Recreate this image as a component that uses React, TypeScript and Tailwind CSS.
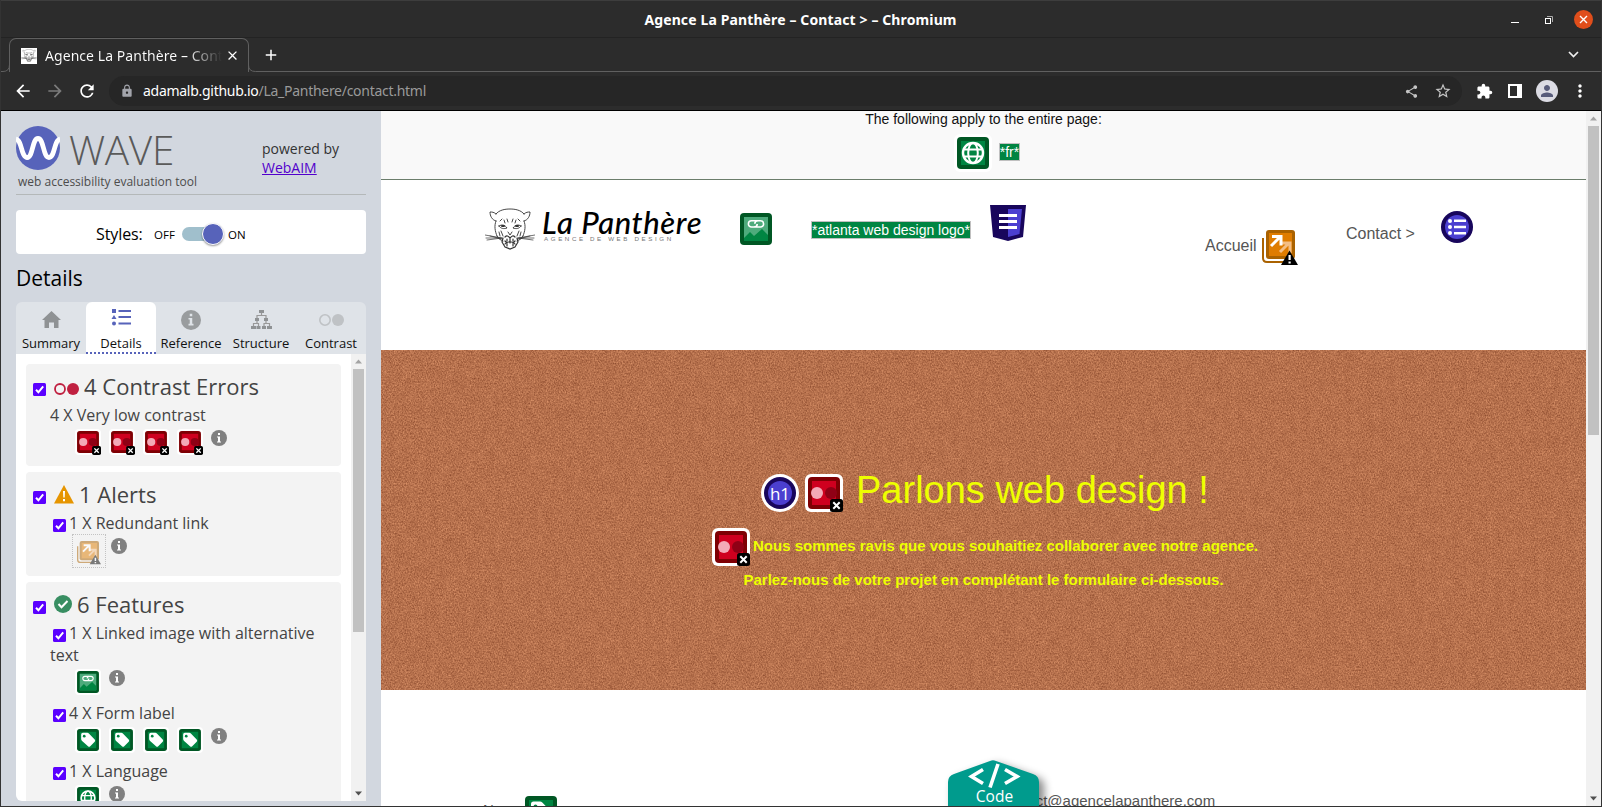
import React from "react";
import type { ReactNode } from "react";
import { MdShare, MdStarBorder, MdExtension, MdPerson, MdMoreVert, MdLock, MdArrowBack, MdArrowForward, MdRefresh, MdAdd, MdClose } from "react-icons/md";

function Panther({ className }: { className: string }) {
  return (
    <svg className={className} viewBox="0 0 50 42" fill="none" stroke="#333" strokeWidth="0.9" strokeLinecap="round">
      <path d="M11 6C14 2 20 1 25 1s11 1 14 5M11 6C9 4 7 4 5 4c0 4 2 8 6 9M39 6c2-2 4-2 6-2 0 4-2 8-6 9M11 13c-2 5-1 10 1 15M39 13c2 5 1 10-1 15M12 28c1 3 4 4 6 5M38 28c-1 3-4 4-6 5" />
      <path d="M14 18c3-2 6-1 8 2-3 1-6 1-8-2zM36 18c-3-2-6-1-8 2 3 1 6 1 8-2z" />
      <path d="M17 18h2M31 18h2" strokeWidth="2" />
      <path d="M19 12l1 3M22 11l1 3M31 12l-1 3M28 11l-1 3M15 13l2-2M35 13l-2-2M23 24l2 3 2-3M16 23l2 5M34 23l-2 5M14 24l1 4M36 24l-1 4" strokeWidth="0.9" />
      <path d="M20 29c2-2 3-1 5 1 2-2 3-3 5-1M18 30l-1 4 3 5M32 30l1 4-3 5M20 39l5 2 5-2M20 36c2-3 8-3 10 0M22 31v2M28 31v2M25 30v5M20 33l2 2M30 33l-2 2M22 38v-2M28 38v-2" strokeWidth="1.2" />
      <path d="M0 27l17 3M2 32l15-2M5 28l12 3M50 27l-17 3M48 32l-15-2M45 28l-12 3M1 30h15M34 30h15" strokeWidth="0.7" />
    </svg>
  );
}

function Check({ className = "" }: { className?: string }) {
  return (
    <svg className={`h-[13px] w-[13px] shrink-0 ${className}`} viewBox="0 0 13 13">
      <rect width="13" height="13" rx="1.5" fill="#5a00ff" />
      <path d="M3 6.8l2.4 2.5L10.2 3.4" fill="none" stroke="#fff" strokeWidth="2" />
    </svg>
  );
}

function Info({ className = "" }: { className?: string }) {
  return (
    <svg className={`h-4 w-4 shrink-0 ${className}`} viewBox="0 0 16 16">
      <circle cx="8" cy="8" r="8" fill="#808080" />
      <path d="M7 3h2v2H7zM6 6.5h3V12H7V7.5H6zM6 11.5h4v1H6z" fill="#fff" />
    </svg>
  );
}

function ContrastIcon({ className }: { className: string }) {
  return (
    <svg className={`shrink-0 overflow-visible ${className}`} viewBox="0 0 38 38">
      <rect width="38" height="38" rx="6" fill="#fff" />
      <rect x="3" y="3" width="32" height="32" rx="4" fill="#7e0004" />
      <rect x="7" y="7" width="24" height="24" fill="#cf001f" />
      <circle cx="26" cy="19" r="6" fill="#8f0015" />
      <circle cx="12" cy="19" r="6" fill="#f3a9b7" />
      <rect x="25" y="25" width="13" height="13" rx="2.5" fill="#000" />
      <path d="M28.3 28.3l6.4 6.4M34.7 28.3l-6.4 6.4" stroke="#fff" strokeWidth="2" />
    </svg>
  );
}

function GreenBox({ className, children }: { className: string; children: ReactNode }) {
  return (
    <svg className={`shrink-0 ${className}`} viewBox="0 0 38 38">
      <rect width="38" height="38" rx="6" fill="#fff" />
      <rect x="3" y="3" width="32" height="32" rx="4" fill="#005724" />
      <rect x="7" y="7" width="24" height="24" fill="#008542" />
      {children}
    </svg>
  );
}

function LinkedImage({ className }: { className: string }) {
  return (
    <GreenBox className={className}>
      <rect x="7" y="7" width="24" height="24" fill="#4dab7c" />
      <path d="M7 28l6-6 4 4 8-7 6 6v6H7z" fill="#008542" />
      <path d="M20.500 10.800h-6a3.100 3.100 0 0 0 0 6.200h2.500q3.200 0 3.200-3M17.500 17h6a3.100 3.100 0 0 0 0-6.200H21q-3.200 0-3.200 3" fill="none" stroke="#fff" strokeWidth="1.600" />
    </GreenBox>
  );
}

function Globe({ className }: { className: string }) {
  return (
    <GreenBox className={className}>
      <g fill="none" stroke="#fff" strokeWidth="2">
        <circle cx="19" cy="19" r="10" strokeWidth="2.400" />
        <ellipse cx="19" cy="19" rx="4.800" ry="10" />
        <path d="M10 15.500h18M10 22.500h18" />
      </g>
    </GreenBox>
  );
}

function Tag({ className }: { className: string }) {
  return (
    <GreenBox className={className}>
      <path d="M9 11q0-2.500 2.500-2.500H18q1.300 0 2.300 1l8.500 8.700q1.500 1.700 0 3.300l-6.500 6.600q-1.700 1.500-3.300 0L10 20q-1-1-1-2.300z" fill="#fff" />
      <circle cx="13.500" cy="13.500" r="2" fill="#008542" />
    </GreenBox>
  );
}

function Redundant({ className }: { className: string }) {
  return (
    <svg className={`shrink-0 ${className}`} viewBox="0 0 36 36">
      <path d="M1 8v20q0 4 4 4h20" fill="none" stroke="#aa6200" strokeWidth="2" />
      <rect x="4" y="0" width="29" height="29" rx="3" fill="#aa6200" />
      <rect x="7" y="3" width="23" height="23" fill="#df7c00" />
      <path d="M18 22l9-9M18.500 13h9.500v10" fill="none" stroke="#f3be85" strokeWidth="3" />
      <path d="M9 16l9-9M10 6.500h9v9" fill="none" stroke="#fff" strokeWidth="3" />
      <path d="M27.500 20.500L36 35H19z" fill="#000" />
      <path d="M26.500 25h2.200v5h-2.200zM26.500 31.500h2.200v2h-2.200z" fill="#fff" />
    </svg>
  );
}

function Tab({ label, active = false, children }: { label: string; active?: boolean; children: ReactNode }) {
  return (
    <div className={`flex h-[52px] w-[70px] flex-col items-center ${active ? "rounded-t-md border-b-2 border-dotted border-[#5763ba] bg-white" : ""}`}>
      <div className="flex h-[32px] items-center justify-center pt-[3px]">{children}</div>
      <span className="text-[13px] leading-[18px] text-[#111]">{label}</span>
    </div>
  );
}

function Heading({ icon, children }: { icon: ReactNode; children: string }) {
  return (
    <div className="flex h-[30px] items-start pl-[7px] text-[22px] leading-[30px] text-[#444]">
      <Check className="mt-[12px]" />
      {icon}
      <h3>{children}</h3>
    </div>
  );
}

function SubRow({ children }: { children: string }) {
  return (
    <div className="flex h-[22px] items-start whitespace-nowrap pl-[27px] leading-[22px]">
      <Check className="mr-[3px] mt-[7px]" />
      <span>{children}</span>
    </div>
  );
}

function Scrollbar({ thumb }: { thumb: string }) {
  return (
    <div className="flex w-[15px] shrink-0 flex-col items-center justify-between bg-[#f1f1f1]">
      <div className="flex flex-col items-center">
        <svg className="h-[15px] w-[15px]" viewBox="0 0 15 15"><path d="M7.500 5.500L11 9.500H4z" fill="#a3a3a3" /></svg>
        <div className={`w-[11px] bg-[#c1c1c1] ${thumb}`} />
      </div>
      <svg className="h-[15px] w-[15px]" viewBox="0 0 15 15"><path d="M7.500 9.500L11 5.500H4z" fill="#505050" /></svg>
    </div>
  );
}

function Chrome() {
  return (
    <header className="flex h-[111px] shrink-0 flex-col border-b border-black bg-[#2c2c2c] text-white">
      <div className="grid h-[38px] grid-cols-[1fr_auto_1fr] items-center border-b border-t border-b-[#232323] border-t-[#3d3d3d]">
        <span />
        <span className="-ml-px pt-[2px] text-[14px] font-bold leading-5 tracking-[0.12px]">Agence La Panthère – Contact &gt; – Chromium</span>
        <div className="flex items-center justify-end pr-[8px] pt-px">
          <span className="mr-[26px] mt-[5px] h-px w-2 bg-white" />
          <svg className="mr-[21px] h-2 w-2" viewBox="0 0 8 8" fill="none"><path d="M2 .5h5.500V6" stroke="#aaa" /><rect x=".5" y="2.500" width="5" height="5" stroke="#fff" /></svg>
          <svg className="h-[19px] w-[19px]" viewBox="0 0 19 19"><circle cx="9.500" cy="9.500" r="9.500" fill="#e04e1b" /><path d="M6 6l7 7M13 6l-7 7" stroke="#fff" strokeWidth="1.400" /></svg>
        </div>
      </div>
      <div className="flex h-[34px] items-stretch">
        <svg className="h-[34px] w-[9px] shrink-0" viewBox="0 0 9 34"><path d="M0 33.500h2q6.500 0 6.500-7V7" fill="none" stroke="#606060" /></svg>
        <div className="-ml-px flex w-[240px] items-center rounded-t-[7px] border border-b-0 border-[#606060] pl-[11px] pr-[9px]">
          <span className="flex h-4 w-4 shrink-0 items-center justify-center bg-white"><Panther className="h-[13px] w-4" /></span>
          <span className="ml-2 w-[177px] shrink-0 overflow-hidden whitespace-nowrap bg-linear-to-r from-white from-80% to-transparent bg-clip-text text-[14px] leading-5 tracking-[0.060px] text-transparent">Agence La Panthère – Contact</span>
          <MdClose className="ml-[3px] h-[15px] w-[15px] shrink-0" />
        </div>
        <svg className="-ml-px h-[34px] w-[9px] shrink-0" viewBox="0 0 9 34"><path d="M.5 7v20q0 6.500 7 6.500h2" fill="none" stroke="#606060" /></svg>
        <div className="flex grow items-center justify-between border-b border-[#606060] pl-[5px] pr-[22px]">
          <MdAdd className="h-[18px] w-[18px]" />
          <svg className="h-[7px] w-[11px]" viewBox="0 0 11 7"><path d="M1 1l4.500 4.500L10 1" fill="none" stroke="#eee" strokeWidth="1.700" /></svg>
        </div>
      </div>
      <div className="flex grow items-center pl-[12px] pr-[11px]">
        <MdArrowBack className="h-5 w-5" />
        <MdArrowForward className="ml-[12px] h-5 w-5 text-[#7b7b7b]" />
        <MdRefresh className="ml-[12px] h-5 w-5" />
        <div className="ml-[12px] flex h-[30px] w-[1353px] items-center rounded-full bg-[#262626] pl-[11px] pr-[10px]">
          <MdLock className="h-[14px] w-[14px] text-[#a2a4ab]" />
          <span className="ml-[9px] grow text-[14px] leading-5 tracking-[-0.28px] text-white">adamalb.github.io<span className="text-[#9a9a9a]">/La_Panthere/contact.html</span></span>
          <MdShare className="h-[15px] w-[15px] text-[#c5c5c5]" />
          <MdStarBorder className="ml-[15px] h-[18px] w-[18px] text-[#c5c5c5]" />
        </div>
        <div className="flex grow items-center justify-end">
          <MdExtension className="h-[17px] w-[17px]" />
          <svg className="ml-[15px] h-[14px] w-[14px]" viewBox="0 0 14 14"><path d="M0 0h14v14H0zM2 2v10h7V2z" fill="#fff" fillRule="evenodd" /></svg>
          <span className="ml-[14px] flex h-[22px] w-[22px] items-center justify-center rounded-full bg-[#dcdce4]"><MdPerson className="h-[18px] w-[18px] text-[#585c7b]" /></span>
          <MdMoreVert className="ml-[12px] h-5 w-5" />
        </div>
      </div>
    </header>
  );
}

function Sidebar() {
  return (
    <aside className="flex w-[380px] shrink-0 flex-col bg-[#d2d7df] pl-[15px] pr-[15px] font-['Open_Sans','Noto_Sans',sans-serif]">
      <div className="flex h-[84px] w-[350px] items-start border-b border-[#b4b8b9]">
        <div className="flex w-[246px] flex-col">
          <div className="flex h-[60px] items-start pt-[15px]">
            <svg className="h-[44px] w-[44px]" viewBox="0 0 44 44">
              <circle cx="22" cy="22" r="22" fill="#5763ba" />
              <path d="M0 13C6 14 5 31 11 31.500S16 12.500 22 12.500 27 31.500 33 31.500 38 14 44 13" fill="none" stroke="#fff" strokeWidth="4.800" />
            </svg>
            <span className="ml-[9px] mt-px text-[40.500px] font-light leading-[46px] tracking-[-0.300px] text-[#5a5a5a]">WAVE</span>
          </div>
          <span className="pl-[2px] pt-[2px] text-[12px] leading-[18px] text-[#4c4c4c]">web accessibility evaluation tool</span>
        </div>
        <div className="pt-[28px] text-[14px] leading-[19px] text-[#333]">
          <p>powered by</p>
          <p className="text-[#5200cc] underline">WebAIM</p>
        </div>
      </div>
      <div className="mt-[15px] flex h-[44px] w-[350px] items-center rounded bg-white pl-[80px] pt-[4px] text-black">
        <span className="w-[58px] text-[16px] leading-5 tracking-[-0.1px]">Styles:</span>
        <span className="w-[28px] pt-px text-[11.500px] leading-4">OFF</span>
        <span className="flex h-[14px] w-[40px] items-center rounded-full bg-linear-to-r from-[#a0bfcc] from-80% to-transparent to-80% pl-[20px]">
          <span className="h-[22px] w-[22px] shrink-0 rounded-full border border-white bg-[#5763ba] shadow-[0_1px_2px_#0006]" />
        </span>
        <span className="pl-[6px] pt-px text-[11.500px] leading-4">ON</span>
      </div>
      <h2 className="mt-[9px] h-[30px] text-[21px] leading-[30px] text-black">Details</h2>
      <nav className="mt-[9px] flex h-[52px] w-[350px] rounded-t-md bg-[#dfe3e8]">
        <Tab label="Summary"><svg className="h-[17px] w-[19px]" viewBox="0 0 19 17"><path d="M9.500 0L19 9h-2.500v8h-4.500v-5.500H7V17H2.500V9H0z" fill="#8f9294" /></svg></Tab>
        <Tab label="Details" active>
          <svg className="-mt-[4px] h-[17px] w-[19px] overflow-visible" viewBox="0 0 19 17" fill="#5763ba"><path d="M0 0h4v4H0zM2 6L4.500 10H-.5zM6.500 1H19v2H6.500zM6.500 7H19v2H6.500zM6.500 13.500H19v2H6.500z" /><circle cx="2" cy="14.500" r="2" /></svg>
        </Tab>
        <Tab label="Reference"><svg className="h-5 w-5" viewBox="0 0 16 16"><circle cx="8" cy="8" r="8" fill="#999c9e" /><path d="M7 3h2v2H7zM6 6.300h3V12H7V7.500H6zM6 11h4v1.300H6z" fill="#dfe3e8" /></svg></Tab>
        <Tab label="Structure">
          <svg className="h-[19px] w-[21px]" viewBox="0 0 21 19"><path d="M8 0h5v3H8zM4 8h4v3H4zM13 8h4v3h-4zM0 16h5v3H0zM5.500 16h4v3h-4zM11 16h4v3h-4zM16 16h5v3h-5z" fill="#8f9294" /><path d="M10.500 3v3M6 8V5.500h9V8M6 11v2.500M2.500 16v-2.500h5V16M15 11v2.500M13 16v-2.500h5.500V16" fill="none" stroke="#999" strokeWidth="1.200" /></svg>
        </Tab>
        <Tab label="Contrast"><svg className="h-3 w-[25px]" viewBox="0 0 25 12"><circle cx="6" cy="6" r="5.200" fill="none" stroke="#bfc2c5" strokeWidth="1.600" /><circle cx="19" cy="6" r="6" fill="#bfc2c5" /></svg></Tab>
      </nav>
      <div className="flex h-[447px] w-[350px] overflow-hidden rounded-bl-md bg-white">
        <div className="flex w-[335px] shrink-0 flex-col gap-[6px] overflow-hidden pl-[10px] pr-[10px] pt-[10px] text-[16px] text-[#444]">
          <section className="h-[102px] shrink-0 rounded bg-[#f3f3f3] pt-[7px]">
            <Heading icon={<svg className="ml-[8px] mr-[5px] mt-[12px] h-3 w-[25px]" viewBox="0 0 25 12"><circle cx="6" cy="6" r="5" fill="none" stroke="#c02040" strokeWidth="1.800" /><circle cx="19" cy="6" r="6" fill="#c02040" /></svg>}>4 Contrast Errors</Heading>
            <p className="mt-[3px] h-[22px] pl-[24px] leading-[22px]">4 X Very low contrast</p>
            <div className="flex items-start gap-[8px] pl-[49px] pt-[3px]">
              <ContrastIcon className="h-[26px] w-[26px]" />
              <ContrastIcon className="h-[26px] w-[26px]" />
              <ContrastIcon className="h-[26px] w-[26px]" />
              <ContrastIcon className="h-[26px] w-[26px]" />
              <Info className="mt-px" />
            </div>
          </section>
          <section className="h-[104px] shrink-0 rounded bg-[#f3f3f3] pt-[7px]">
            <Heading icon={<svg className="ml-[8px] mr-[5px] mt-[6px] h-[19px] w-5" viewBox="0 0 20 19"><path d="M10 0l10 18.500H0z" fill="#e69500" /><path d="M9 6h2l-.3 6.500H9.300zM9 14h2v2.200H9z" fill="#fff" /></svg>}>1 Alerts</Heading>
            <div className="mt-[3px]"><SubRow>1 X Redundant link</SubRow></div>
            <div className="flex items-start pl-[46px]">
              <span className="flex h-[34px] w-[34px] items-center justify-center border border-dotted border-[#c3c3c3]"><Redundant className="mt-[3px] h-6 w-6 opacity-50" /></span>
              <Info className="ml-[5px] mt-[4px]" />
            </div>
          </section>
          <section className="h-[240px] shrink-0 rounded bg-[#f3f3f3] pt-[7px]">
            <Heading icon={<svg className="ml-[8px] mr-[5px] mt-[6px] h-[18px] w-[18px]" viewBox="0 0 18 18"><circle cx="9" cy="9" r="9" fill="#388e62" /><path d="M4.500 9l3 3.200 6-6.200" fill="none" stroke="#fff" strokeWidth="2" /></svg>}>6 Features</Heading>
            <div className="mt-[3px]"><SubRow>1 X Linked image with alternative</SubRow></div>
            <p className="h-[22px] pl-[24px] leading-[22px]">text</p>
            <div className="flex h-9 items-start gap-[6px] pl-[49px] pt-[3px]">
              <LinkedImage className="h-[26px] w-[26px]" />
              <Info className="ml-[2px] mt-px" />
            </div>
            <SubRow>4 X Form label</SubRow>
            <div className="flex h-9 items-start gap-[8px] pl-[49px] pt-[3px]">
              <Tag className="h-[26px] w-[26px]" />
              <Tag className="h-[26px] w-[26px]" />
              <Tag className="h-[26px] w-[26px]" />
              <Tag className="h-[26px] w-[26px]" />
              <Info className="mt-px" />
            </div>
            <SubRow>1 X Language</SubRow>
            <div className="flex h-9 items-start gap-[6px] pl-[49px] pt-[3px]">
              <Globe className="h-[26px] w-[26px]" />
              <Info className="ml-[2px] mt-px" />
            </div>
          </section>
        </div>
        <Scrollbar thumb="h-[263px]" />
      </div>
    </aside>
  );
}

function Page() {
  return (
    <main className="flex w-[1205px] shrink-0 flex-col overflow-hidden bg-white font-['Liberation_Sans',Arial,sans-serif]">
      <div className="flex h-[69px] shrink-0 flex-col items-center border-b border-[#6b7d6b] bg-[#f9f9f9]">
        <p className="text-[14px] leading-4 text-[#111]">The following apply to the entire page:</p>
        <div className="ml-[7px] mt-[7px] flex items-start">
          <Globe className="h-[38px] w-[38px]" />
          <span className="ml-[7px] mt-[9px] h-[18px] border border-[#c0c0c0] bg-[#008542] text-[14px] leading-4 text-white">*fr*</span>
        </div>
      </div>
      <div className="flex h-[170px] shrink-0 items-start">
        <Panther className="ml-[104px] mt-[28px] h-[42px] w-[50px]" />
        <div className="ml-[7px] mt-[23px] w-[191px] shrink-0 whitespace-nowrap">
          <p className="h-[33px] font-['Lato'] text-[31px] font-medium italic leading-[38px] tracking-[0.600px] text-black">La Panthère</p>
          <p className="pl-[2px] text-[6.200px] leading-[6px] tracking-[2.600px] text-[#777]">AGENCE DE WEB DESIGN</p>
        </div>
        <LinkedImage className="ml-[4px] mt-[30px] h-[38px] w-[38px]" />
        <span className="ml-[36px] mt-[41px] h-[18px] w-[160px] shrink-0 whitespace-nowrap border border-[#c0c0c0] bg-[#008542] text-[14px] leading-4 text-white">*atlanta web design logo*</span>
        <svg className="ml-[19px] mt-[25px] h-[36px] w-[36px] shrink-0" viewBox="0 0 36 36">
          <path d="M0 0h36l-3 32-15 4-15-4z" fill="#18065c" />
          <path d="M18 4h14l-2.500 25L18 32z" fill="#4b3fd0" />
          <path d="M9 9h18v3H9zM9 15h18v3H9zM9 21h18v3H9z" fill="#fff" />
        </svg>
        <span className="ml-[179px] mt-[57px] w-[57px] text-[16px] leading-[18px] text-[#555]">Accueil</span>
        <Redundant className="mt-[50px] h-[36px] w-[36px]" />
        <span className="ml-[48px] mt-[45px] w-[95px] text-[16px] leading-[18px] text-[#555]">Contact &gt;</span>
        <svg className="mt-[31px] h-8 w-8 shrink-0" viewBox="0 0 32 32">
          <circle cx="16" cy="16" r="16" fill="#18065c" /><circle cx="16" cy="16" r="12" fill="#4b3fd0" />
          <path d="M13 8.500h12v2.500H13zM13 14.700h12v2.500H13zM13 21h12v2.500H13z" fill="#fff" />
          <circle cx="9" cy="10" r="2" fill="#fff" /><circle cx="9" cy="16" r="2" fill="#fff" /><circle cx="9" cy="22" r="2" fill="#fff" />
        </svg>
      </div>
      <div className="relative h-[340px] shrink-0 overflow-hidden bg-[#b8704c]">
        <svg className="absolute inset-0 h-full w-full">
          <filter id="paper" x="0" y="0" width="100%" height="100%" colorInterpolationFilters="sRGB">
            <feTurbulence type="fractalNoise" baseFrequency="0.75 0.6" numOctaves="2" seed="7" result="fine" />
            <feTurbulence type="fractalNoise" baseFrequency="0.14 0.07" numOctaves="3" seed="3" result="broad" />
            <feComposite in="fine" in2="broad" operator="arithmetic" k2="0.86" k3="0.14" />
            <feColorMatrix values="0.44 0 0 0 0.490  0.40 0 0 0 0.240  0.33 0 0 0 0.135  0 0 0 0 1" />
          </filter>
          <rect width="100%" height="100%" filter="url(#paper)" />
        </svg>
        <div className="relative flex flex-col items-start text-[#eeff00]">
          <div className="ml-[380px] mt-[118px] flex items-start">
            <svg className="mt-[6px] h-[38px] w-[38px]" viewBox="0 0 38 38">
              <circle cx="19" cy="19" r="19" fill="#fff" /><circle cx="19" cy="19" r="16" fill="#18065c" /><circle cx="19" cy="19" r="12" fill="#4b3fd0" />
              <text x="19" y="25.500" textAnchor="middle" fill="#fff" className="font-['Open_Sans'] text-[17px]">h1</text>
            </svg>
            <ContrastIcon className="ml-[6px] mt-[6px] h-[38px] w-[38px]" />
            <h1 className="ml-[13px] whitespace-nowrap text-[38px] leading-[44px]">Parlons web design !</h1>
          </div>
          <div className="ml-[331px] mt-[16px] flex items-start">
            <ContrastIcon className="h-[38px] w-[38px]" />
            <p className="ml-[3px] mt-[9px] whitespace-nowrap text-[15px] font-bold leading-[18px]">Nous sommes ravis que vous souhaitiez collaborer avec notre agence.</p>
          </div>
          <p className="ml-[362.500px] mt-[5px] whitespace-nowrap text-[15px] font-bold leading-[18px]">Parlez-nous de votre projet en complétant le formulaire ci-dessous.</p>
        </div>
      </div>
      <div className="flex h-[116px] shrink-0 items-start overflow-hidden text-[15px] leading-[18px] text-[#555]">
        <span className="ml-[102px] mt-[111px] w-[39px]">Nom</span>
        <Tag className="mt-[103px] h-[38px] w-[38px]" />
        <div className="relative z-10 ml-[388px] mt-[70px] h-[60px] w-[92px] shrink-0">
          <svg className="absolute inset-0 h-[60px] w-[110px] overflow-visible" viewBox="0 0 110 60">
            <path d="M6 14Q0 16 0 22v60h91V22q0-6-6-8L48 1q-3-1.500-6 0z" fill="#009b8d" className="drop-shadow-[5px_4px_4px_#0007]" />
            <path d="M35 9.500L23.500 16.500l11.500 7M57 9.500l12 7-12 7M50 4L42 27.500" fill="none" stroke="#fff" strokeWidth="3.600" />
          </svg>
          <span className="absolute left-px top-[26px] w-[91px] text-center font-['Open_Sans'] text-[15.500px] leading-5 text-white">Code</span>
        </div>
        <span className="-ml-[41px] mt-[102px] shrink-0 whitespace-nowrap">contact@agencelapanthere.com</span>
      </div>
    </main>
  );
}

export default function App() {
  return (
    <div className="flex h-[807px] w-[1602px] flex-col overflow-hidden border border-t-0 border-[#333] bg-white font-['Noto_Sans',sans-serif]">
      <Chrome />
      <div className="flex h-[695px] overflow-hidden">
        <Sidebar />
        <Page />
        <Scrollbar thumb="h-[309px]" />
      </div>
    </div>
  );
}
